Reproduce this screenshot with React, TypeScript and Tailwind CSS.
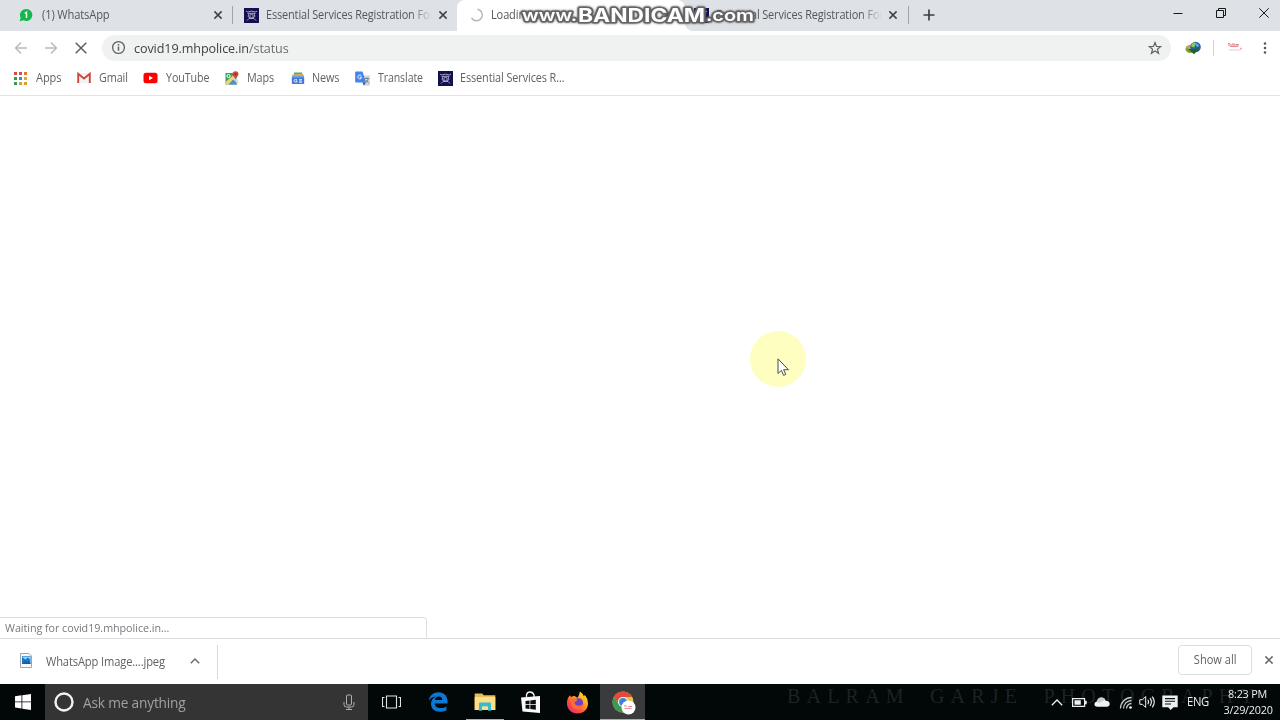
import type { ReactNode } from "react";

type TabProps = {
  title: string;
  icon: ReactNode;
  className: string;
  titleClassName?: string;
  closeClassName?: string;
};

type BookmarkProps = {
  label: string;
  icon: ReactNode;
  className: string;
  labelClassName: string;
};

function CloseIcon({ className }: { className?: string }) {
  return (
    <svg viewBox="0 0 10 10" className={`h-2.5 w-2.5 shrink-0 ${className ?? ""}`} aria-hidden="true">
      <path d="M1.4 1.4l7.2 7.2M8.6 1.4L1.4 8.6" stroke="currentColor" strokeWidth="1.5" fill="none" />
    </svg>
  );
}

function EmblemIcon() {
  return (
    <svg viewBox="0 0 15 15" className="h-[15px] w-[15px] shrink-0" aria-hidden="true">
      <rect width="15" height="15" fill="#13104f" />
      <g fill="none" stroke="#b9b5d6" strokeWidth="0.9">
        <path d="M2 3.2c2 1.5 3.5 0 5.5 0s3.5 1.5 5.5 0M3.5 5.3h8M5 5.5l-1 3 2 1.5M10 5.5l1 3-2 1.5M3 12.5l2-2h5l2 2" />
        <circle cx="7.5" cy="8" r="1.7" />
      </g>
    </svg>
  );
}

function WhatsAppIcon() {
  return (
    <svg viewBox="0 0 14 14" className="h-3.5 w-3.5 shrink-0" aria-hidden="true">
      <path d="M7.3 1A6 6 0 1 1 4.5 12.3L.7 13.3l1-3.5A6 6 0 0 1 7.3 1z" fill="#12b84b" />
      <path d="M5.8 5.3l1.7-1.1v5.9" fill="none" stroke="#fff" strokeWidth="1.4" />
    </svg>
  );
}

function SpinnerIcon() {
  return (
    <svg viewBox="0 0 14 14" className="h-3.5 w-3.5 shrink-0" aria-hidden="true">
      <path d="M7.5 1.2A5.8 5.8 0 1 1 1.5 9.8" fill="none" stroke="#b4b6ba" strokeWidth="1.4" />
    </svg>
  );
}

function Tab({ title, icon, className, titleClassName, closeClassName }: TabProps) {
  return (
    <div className={`relative flex h-[31px] shrink-0 items-center ${className}`}>
      {icon}
      <span
        className={`shrink-0 origin-left overflow-hidden whitespace-nowrap text-[12px] leading-[16px] tracking-[-0.15px] text-[#53575c] ${titleClassName ?? ""}`}
      >
        {title}
      </span>
      <CloseIcon className={`absolute text-[#3f4246] ${closeClassName ?? ""}`} />
    </div>
  );
}

function TabStrip() {
  return (
    <div className="relative flex h-[31px] bg-[#dee1e6]">
      <Tab
        title="(1) WhatsApp"
        icon={<WhatsAppIcon />}
        className="w-[233px] pb-px pl-[19px]"
        titleClassName="ml-[9px] scale-x-[0.93]"
        closeClassName="left-[213px] top-[10px]"
      />
      <span className="absolute left-[232px] top-1.5 h-[18px] w-px bg-[#a0a3a8]" />
      <Tab
        title="Essential Services Registration Form"
        icon={<EmblemIcon />}
        className="w-[224px] rounded-br-lg pb-px pl-[11px]"
        titleClassName="ml-[7px] w-[182px] scale-x-[0.91] [mask-image:linear-gradient(to_right,#000_88%,transparent)]"
        closeClassName="left-[205px] top-[10px]"
      />
      <Tab
        title="Loading..."
        icon={<SpinnerIcon />}
        className="w-[228px] rounded-t-lg bg-white pb-px pl-[13px]"
        titleClassName="ml-[7px] scale-x-[0.92]"
        closeClassName="left-[205px] top-[10px]"
      />
      <div className="w-[223px] bg-white">
        <Tab
          title="Essential Services Registration Form"
          icon={<EmblemIcon />}
          className="w-[223px] rounded-bl-lg bg-[#dee1e6] pb-px pl-[9px]"
          titleClassName="ml-[7px] w-[182px] scale-x-[0.91] [mask-image:linear-gradient(to_right,#000_88%,transparent)]"
          closeClassName="left-[203px] top-[10px]"
        />
      </div>
      <span className="mt-1.5 h-[18px] w-px bg-[#a0a3a8]" />
      <svg viewBox="0 0 12 12" className="ml-[14px] mt-[9px] h-3 w-3" aria-hidden="true">
        <path d="M6 .5v11M.5 6h11" stroke="#3c4043" strokeWidth="1.7" />
      </svg>
      <div className="ml-auto flex h-[25px] items-center text-[#17181a]">
        <svg viewBox="0 0 10 10" className="mr-[33px] h-2.5 w-2.5" aria-hidden="true">
          <path d="M.5 5.500h9" stroke="currentColor" />
        </svg>
        <svg viewBox="0 0 10 10" className="mr-[33px] h-2.5 w-2.5" aria-hidden="true">
          <path d="M.5 2.500h7v7h-7zM2.500 2.500v-2h7v7h-2" stroke="currentColor" fill="none" />
        </svg>
        <svg viewBox="0 0 10 10" className="mr-[11px] h-2.5 w-2.5" aria-hidden="true">
          <path d="M.3.3l9.4 9.4M9.7.3L.3 9.7" stroke="currentColor" />
        </svg>
      </div>
      <BandicamMark />
    </div>
  );
}

function BandicamMark() {
  return (
    <svg
      viewBox="0 0 244 28"
      className="absolute left-[517px] top-0 z-10 h-7 w-[244px] overflow-visible font-['Inter',sans-serif] font-bold drop-shadow-[0_0_1px_#555]"
      fill="#fff"
      stroke="#656565"
      strokeWidth="3.2"
      strokeLinejoin="round"
      paintOrder="stroke"
    >
      <text x="5" y="21" fontSize="16.5" fontWeight="600" textLength="55" lengthAdjust="spacingAndGlyphs">
        www.
      </text>
      <text x="61" y="21.5" fontSize="18.5" textLength="127" lengthAdjust="spacingAndGlyphs">
        BANDICAM
      </text>
      <text x="189" y="21" fontSize="16.5" fontWeight="600" textLength="48" lengthAdjust="spacingAndGlyphs">
        .com
      </text>
    </svg>
  );
}

function Toolbar() {
  return (
    <div className="flex h-[33px] items-center bg-white">
      <svg viewBox="0 0 14 14" className="ml-3.5 h-3.5 w-3.5" aria-hidden="true">
        <path d="M13 7H1.500M7 1.500L1.500 7 7 12.500" fill="none" stroke="#b7b9bc" strokeWidth="1.4" />
      </svg>
      <svg viewBox="0 0 14 14" className="ml-4 h-3.5 w-3.5" aria-hidden="true">
        <path d="M1 7h11.500M7 1.500L12.500 7 7 12.500" fill="none" stroke="#b7b9bc" strokeWidth="1.4" />
      </svg>
      <svg viewBox="0 0 14 14" className="ml-4 h-3.5 w-3.5" aria-hidden="true">
        <path d="M1.700 1.700l10.600 10.600M12.300 1.700L1.700 12.300" stroke="#5a5d61" strokeWidth="1.5" />
      </svg>
      <div className="ml-3.5 flex h-[26px] w-[1069px] items-center rounded-full bg-[#f0f2f2] pl-[9px] pr-[9px]">
        <svg viewBox="0 0 15 15" className="h-[15px] w-[15px]" aria-hidden="true">
          <circle cx="7.500" cy="7.500" r="5.900" fill="none" stroke="#5f6368" strokeWidth="1.3" />
          <path d="M7.500 6.600v4.200M7.500 4v1.500" stroke="#5f6368" strokeWidth="1.5" />
        </svg>
        <span className="ml-2 origin-left scale-x-[0.935] whitespace-nowrap text-[13.5px] leading-[18px] tracking-[-0.12px] text-[#3f4246]">
          covid19.mhpolice.in<span className="text-[#6a6d71]">/status</span>
        </span>
        <svg viewBox="0 0 14 14" className="ml-auto h-3.5 w-3.5" aria-hidden="true">
          <path
            d="M7 1.500l1.500 3.900 4.200.2-3.300 2.600 1.200 4.100L7 10l-3.600 2.300 1.200-4.100L1.300 5.600l4.200-.2z"
            fill="none"
            stroke="#5f6368"
            strokeWidth="1.2"
          />
        </svg>
      </div>
      <svg viewBox="0 0 16 14" className="ml-[14px] h-3.5 w-4" aria-hidden="true">
        <ellipse cx="5" cy="8" rx="4.500" ry="4" fill="#72a632" />
        <path d="M1 6.500Q4 2 8 5L5 9z" fill="#d9a14c" />
        <circle cx="10.500" cy="6" r="5.300" fill="#2861a5" />
        <path d="M7 2.500q3-2 4 0l-2 4-3-1z" fill="#8ccd55" />
        <path d="M11 2l3 2-1 2-2-1z" fill="#62aee2" />
        <path d="M3 8l6 5.300L14.500 7l-5 1z" fill="#1f6424" />
      </svg>
      <span className="ml-3 h-4 w-px bg-[#d2d4d7]" />
      <svg viewBox="0 0 16 12" className="ml-[13px] h-3 w-4" aria-hidden="true">
        <path d="M1 2h11v2H1z" fill="#f4b8bd" />
        <path d="M1 1.500h2M5 2h3M9 2.500h3M3 4.500h8M13 6l2 1" stroke="#e58a92" strokeWidth="1" />
        <path d="M2 8h12" stroke="#f4c7ca" />
      </svg>
      <svg viewBox="0 0 4 14" className="ml-5 h-3.5 w-1" fill="#55585c" aria-hidden="true">
        <circle cx="2" cy="2.500" r="1.300" />
        <circle cx="2" cy="7" r="1.300" />
        <circle cx="2" cy="11.500" r="1.300" />
      </svg>
    </div>
  );
}

const appDots = [
  { x: 0, y: 0, fill: "#d94b3d" },
  { x: 5, y: 0, fill: "#d94b3d" },
  { x: 10, y: 0, fill: "#dc7b2d" },
  { x: 0, y: 5, fill: "#2e9c55" },
  { x: 5, y: 5, fill: "#3c83e2" },
  { x: 10, y: 5, fill: "#e3a72b" },
  { x: 0, y: 10, fill: "#2e9c55" },
  { x: 5, y: 10, fill: "#d9a02f" },
  { x: 10, y: 10, fill: "#d9a02f" },
];

function Bookmark({ label, icon, className, labelClassName }: BookmarkProps) {
  return (
    <div className={`flex shrink-0 items-center ${className}`}>
      {icon}
      <span
        className={`origin-left whitespace-nowrap text-[12px] leading-[16px] tracking-[-0.1px] text-[#5f6266] ${labelClassName}`}
      >
        {label}
      </span>
    </div>
  );
}

function BookmarksBar() {
  return (
    <div className="flex h-8 items-center border-b border-[#e3e4e6] bg-white pb-[3px]">
      <Bookmark
        label="Apps"
        className="w-[77px] pl-3.5"
        labelClassName="ml-[9px] scale-x-[0.92]"
        icon={
          <svg viewBox="0 0 13 13" className="h-[13px] w-[13px]" aria-hidden="true">
            {appDots.map((dot) => (
              <rect key={`${dot.x}-${dot.y}`} x={dot.x} y={dot.y} width="3" height="3" fill={dot.fill} />
            ))}
          </svg>
        }
      />
      <Bookmark
        label="Gmail"
        className="w-[66px]"
        labelClassName="ml-2 scale-x-[0.9]"
        icon={
          <svg viewBox="0 0 14 12" className="h-3 w-3.5" aria-hidden="true">
            <path d="M1 1h12v10H1z" fill="#f2f2f2" />
            <path d="M1.200 11V1.800L7 6.500l5.800-4.700V11" fill="none" stroke="#cf473c" strokeWidth="1.9" />
          </svg>
        }
      />
      <Bookmark
        label="YouTube"
        className="w-[82px]"
        labelClassName="ml-2 scale-x-[0.89]"
        icon={
          <svg viewBox="0 0 15 12" className="h-3 w-[15px]" aria-hidden="true">
            <rect x=".5" y=".7" width="14" height="10.6" rx="2.5" fill="#f00" />
            <path d="M6 3.700v4.600L10 6z" fill="#fff" />
          </svg>
        }
      />
      <Bookmark
        label="Maps"
        className="w-[66px]"
        labelClassName="ml-2 scale-x-[0.9]"
        icon={
          <svg viewBox="0 0 14 14" className="h-3.5 w-3.5" aria-hidden="true">
            <path d="M.5 2h11v11.500H.5z" fill="#35a15a" />
            <path d="M.5 11L9 3.500l2 2-7.500 8H.5z" fill="#f0d175" />
            <path d="M4 13.500l4-4.200 4.500 4.200z" fill="#4b8ee6" />
            <path d="M9 6l4 3v4L7.500 8z" fill="#d5dade" />
            <circle cx="3.500" cy="5" r="1.600" fill="none" stroke="#fff" />
            <path d="M10.500.3a3 3 0 0 1 3 3c0 2-2 2.500-3 5.200-1-2.700-3-3.200-3-5.200a3 3 0 0 1 3-3z" fill="#d5483e" />
            <circle cx="10.500" cy="3.300" r="1" fill="#86251f" />
          </svg>
        }
      />
      <Bookmark
        label="News"
        className="w-[64px]"
        labelClassName="ml-[7px] scale-x-[0.9]"
        icon={
          <svg viewBox="0 0 14 14" className="h-3.5 w-3.5" aria-hidden="true">
            <path d="M3 1.500h8V6H3z" fill="#4bab68" />
            <path d="M1.500 3.500L12 2.500l.5 4h-11z" fill="#dcae5b" />
            <path d="M1 4.500h12v3H1z" fill="#74a4e6" />
            <path d="M.8 6.500h12.400v5.700q0 .8-.8.8H1.600q-.8 0-.8-.8z" fill="#4678d5" />
            <path d="M6 8.500H4.300Q3 8.500 3 9.800T4.300 11H6V9.800H4.800M8 8.600h3M8 10h3M8 11.300h3" stroke="#e6eefb" fill="none" strokeWidth=".9" />
          </svg>
        }
      />
      <Bookmark
        label="Translate"
        className="w-[82px]"
        labelClassName="ml-2 scale-x-[0.88]"
        icon={
          <svg viewBox="0 0 15 15" className="h-[15px] w-[15px]" aria-hidden="true">
            <path d="M6 4.500h8q1 0 1 1V14q0 .8-1 .8H9z" fill="#d3d6db" />
            <path d="M1 .5h6.500L11 11.500H1q-.8 0-.8-.8V1.300Q.2.500 1 .500z" fill="#4384ec" />
            <path d="M7.500 11.500H11l-2.300 3z" fill="#2754ad" />
            <path d="M6.300 4.500Q5 3.300 3.700 4.200 2.300 5.500 3.300 7.200 4.500 8.600 6 7.600 6.500 7 6.500 6.200H4.800" fill="none" stroke="#e7effc" />
            <path d="M10 7.500h4M12 6.500v1M13.300 7.500q-.5 2.500-2.500 4M11 9q1 2 2.700 3" fill="none" stroke="#707982" strokeWidth=".9" />
          </svg>
        }
      />
      <Bookmark
        label="Essential Services R..."
        className="pl-px"
        labelClassName="ml-[7px] scale-x-[0.905]"
        icon={<EmblemIcon />}
      />
    </div>
  );
}

function PageArea() {
  return (
    <main className="relative flex h-[542px] flex-col justify-end bg-white">
      <div className="absolute left-[750px] top-[235px] h-14 w-14 rounded-full bg-[#fefec0] blur-[0.5px]" />
      <svg viewBox="0 0 13 19" className="absolute left-[777px] top-[262px] h-[19px] w-[13px]" aria-hidden="true">
        <path
          d="M1 .8v14.700l3.400-3.100 2.200 5 2.200-1-2.200-4.700h4.800z"
          fill="#fff"
          stroke="#4d4d45"
          strokeLinejoin="round"
        />
      </svg>
      <div className="flex h-[21px] w-[427px] items-center rounded-tr border-r border-t border-[#dcdddf] pl-[5px]">
        <span className="origin-left scale-x-[0.935] whitespace-nowrap text-[11.5px] leading-[16px] tracking-[-0.05px] text-[#75787c]">
          Waiting for covid19.mhpolice.in...
        </span>
      </div>
    </main>
  );
}

function DownloadShelf() {
  return (
    <div className="flex h-[46px] items-center border-t border-[#dcdddf] bg-white">
      <svg viewBox="0 0 12 15" className="-mt-0.5 ml-5 h-[15px] w-3" aria-hidden="true">
        <path d="M.5.500h8.500l2.500 2.500v11.500H.5z" fill="#f6f8fa" stroke="#a1a6aa" />
        <path d="M2 3h8.500v8H2z" fill="#1678c9" />
        <path d="M2.500 4.500l3 2L8 4.500l2 2v-3H2.500z" fill="#9bd2f3" />
        <path d="M2 11l3-3 2 1.500L8.500 8l2 2v1z" fill="#1c5b9d" />
      </svg>
      <span className="ml-3.5 w-[120px] origin-left scale-x-[0.93] whitespace-nowrap text-[12px] leading-[16px] tracking-[-0.15px] text-[#5f6266]">
        WhatsApp Image....jpeg
      </span>
      <svg viewBox="0 0 10 6" className="-mt-0.5 ml-6 h-1.5 w-2.5" aria-hidden="true">
        <path d="M.8 5.300L5 1.100l4.200 4.200" fill="none" stroke="#66696d" strokeWidth="1.4" />
      </svg>
      <span className="ml-[17px] h-[34px] w-px bg-[#d9dadc]" />
      <button className="-mt-1 ml-auto h-[30px] w-[74px] rounded border border-[#dcdddf] text-[12px] font-medium leading-[16px] text-[#5f6266]">
        <span className="inline-block scale-x-[0.92]">Show all</span>
      </button>
      <CloseIcon className="-mt-1 ml-3 mr-1.5 text-[#66696d]" />
    </div>
  );
}

function PinnedApps() {
  return (
    <div className="flex h-9">
      <div className="flex w-[47px] items-center justify-center">
        <svg viewBox="0 0 19 14" className="h-3.5 w-[19px]" fill="none" stroke="#dfe3e4" aria-hidden="true">
          <path d="M4.500 1h10v12h-10zM2.500 2.500h-2v9h2M16.500 2.500h2v9h-2" strokeWidth="1.1" />
        </svg>
      </div>
      <div className="flex w-[46px] items-center justify-center">
        <svg viewBox="0 0 20 20" className="h-5 w-5" aria-hidden="true">
          <path
            d="M.7 8.800C1.500 3.500 5.500.2 10.500.2c5.600 0 9 3.800 9 9v2.300H6.700c.2 3.100 2.700 4.500 6 4.500 2.200 0 4.100-.6 5.700-1.600v4c-1.800.9-4 1.400-6.400 1.400-5.600 0-9-3.200-9-8 0-3.500 1.900-6.100 5-7.400C4.500 4.500 2.300 6.300.7 8.800zM6.900 8h7.300c0-2.400-1.200-3.600-3.400-3.600-2.100 0-3.500 1.300-3.900 3.600z"
            fill="#0b78d3"
          />
        </svg>
      </div>
      <div className="flex w-[47px] items-center justify-center">
        <div className="flex h-full w-[38px] items-center justify-center border-b border-[#84b5df] pt-px">
          <svg viewBox="0 0 22 18" className="h-[18px] w-[22px]" aria-hidden="true">
            <path d="M.7.500h7.500l1.500 1.800h11.600V17H.7z" fill="#e7bd59" />
            <path d="M.7 4h20.600v13H.7z" fill="#fbdf88" />
            <path d="M5 17.800V10.500Q5 9.500 6 9.500h10q1 0 1 1v7.300h-3V14q0-.7-.7-.7H8.700Q8 13.300 8 14v3.800z" fill="#35bad2" />
          </svg>
        </div>
      </div>
      <div className="flex w-[46px] items-center justify-center">
        <svg viewBox="0 0 22 23" className="h-[23px] w-[22px]" aria-hidden="true">
          <path d="M6.500 6.500V3.800Q7 1 10 1t4 3v2" fill="none" stroke="#f5f5f5" strokeWidth="1.3" />
          <path d="M1 6.500l19-1.500v17L2.500 20.500z" fill="#fafafa" />
          <path d="M5.500 10l4-.5v3.800h-4zM10.300 9.400l5.500-.6v4.500h-5.500zM5.500 14.100h4v3.900l-4-.4zM10.300 14.100h5.500v4.600l-5.500-.6z" fill="#0a0c0d" />
        </svg>
      </div>
      <div className="flex w-[46px] items-center justify-center">
        <svg viewBox="0 0 24 24" className="h-[23px] w-[23px]" aria-hidden="true">
          <defs>
            <linearGradient id="fox" x1="1" y1="0" x2="0.2" y2="1">
              <stop offset="0" stopColor="#fff043" />
              <stop offset=".45" stopColor="#ff9a20" />
              <stop offset=".75" stopColor="#fb4b3c" />
              <stop offset="1" stopColor="#e52883" />
            </linearGradient>
          </defs>
          <path
            d="M4 4.500l1.300 1.700Q7 5 9 5.200L12 7q2-3 2.500-6.500 3 1.800 4 5l1.200-1.300Q23 8 23 13c0 6-5 10.500-11 10.500S1 19 1 13C1 9.500 2 6.700 4 4.500z"
            fill="url(#fox)"
          />
          <circle cx="12.800" cy="12.500" r="5" fill="#6c42c9" />
          <path d="M4.500 9.500q4-3 7.500-.5-.5 2-3 2.500 0 4 4.500 4 3 0 5-2.500-1 6-6.500 6.200Q4.500 19 4.500 9.500z" fill="#fc6a37" />
        </svg>
      </div>
      <div className="flex w-[45px] items-center justify-center border-b border-[#84b5df] bg-[#3a3b3c] pt-0.5">
        <svg viewBox="0 0 24 24" className="ml-0.5 h-6 w-6" aria-hidden="true">
          <circle cx="11" cy="11" r="10.500" fill="#e7c746" />
          <path d="M1.900 5.800A10.500 10.500 0 0 1 20.300 6H11a5 5 0 0 0-4.700 6.500z" fill="#e04b3b" />
          <path d="M1.900 5.800A10.500 10.500 0 0 0 10 21.500l4.500-7-8-1.500z" fill="#389b51" />
          <circle cx="11" cy="11" r="5" fill="#f4f4f4" />
          <circle cx="11" cy="11" r="3.900" fill="#4480df" />
          <circle cx="16.500" cy="16.500" r="7" fill="#fff" />
          <path d="M12 15h3M16 15.500h4M12.500 17.500h7" stroke="#df8f93" />
        </svg>
      </div>
    </div>
  );
}

function SystemTray() {
  return (
    <div className="relative ml-auto flex h-9 items-center text-[#eef0f0]">
      <svg viewBox="0 0 12 7" className="h-[7px] w-3" aria-hidden="true">
        <path d="M.8 6.200L6 1l5.200 5.200" fill="none" stroke="currentColor" strokeWidth="1.3" />
      </svg>
      <svg viewBox="0 0 15 9" className="ml-[9px] h-[9px] w-[15px]" aria-hidden="true">
        <path d="M.6.600h12v7.800H.6z" fill="none" stroke="currentColor" strokeWidth="1.2" />
        <path d="M2.500 2.300h6.300v4.400H2.500zM13 2.700h1.700v3.600H13z" fill="currentColor" />
      </svg>
      <svg viewBox="0 0 16 10" className="ml-[7px] h-2.5 w-4" aria-hidden="true">
        <path d="M3.500 9.700Q.3 9.500.4 7 .7 4.500 3 4.500 3.800.8 7.500.6q3-.1 4.200 3.200 3.500 0 4 3 0 2.700-3 2.900z" fill="#f2f2f2" />
        <path d="M2.500 4.500Q4 .8 7.500.6q2.500 0 3.700 2.200L5 6z" fill="#c9cdce" />
      </svg>
      <svg viewBox="0 0 14 13" className="ml-[9px] h-[13px] w-3.5" fill="none" stroke="#c5cacb" aria-hidden="true">
        <path d="M1.500 12.500A11 11 0 0 1 12.500 1.500M4.500 12.500a8 8 0 0 1 8-8M7.500 12.500a5 5 0 0 1 5-5" strokeWidth="1.3" />
        <circle cx="11.500" cy="11.500" r="1.300" fill="#fff" stroke="none" />
      </svg>
      <svg viewBox="0 0 17 14" className="ml-[6px] h-3.5 w-[17px]" fill="none" stroke="currentColor" aria-hidden="true">
        <path d="M.8 4.700h2.700L6.700 1.500v11L3.500 9.300H.8z" />
        <path d="M8.800 4.700q1.500 2.300 0 4.600M11 3.200q2.800 3.800 0 7.600M13.300 1.700q4 5.300 0 10.600" strokeWidth="1.1" />
      </svg>
      <svg viewBox="0 0 16 15" className="ml-[6px] mt-px h-[15px] w-4" aria-hidden="true">
        <path d="M.3.500h15.400v11.700h-4.200L8.700 15l-2.500-2.800H.3z" fill="currentColor" />
        <path d="M3 3.600h10M3 6.300h10M3 9h6" stroke="#0c1011" strokeWidth="1.1" />
      </svg>
      <span className="ml-[9px] w-[23px] origin-left scale-x-[0.9] whitespace-nowrap text-[12.5px] leading-[16px] tracking-[-0.4px]">
        ENG
      </span>
      <div className="ml-[12px] mr-[7px] w-[51px] scale-x-[0.94] whitespace-nowrap text-center text-[11.5px] leading-[16px] tracking-[-0.25px]">
        <p>8:23 PM</p>
        <p>3/29/2020</p>
      </div>
    </div>
  );
}

function Taskbar() {
  return (
    <div className="relative flex h-9 items-center overflow-hidden bg-[#020708]">
      <span className="absolute left-[787px] top-[1px] whitespace-nowrap font-['Liberation_Serif',serif] text-[20px] leading-[23px] tracking-[6.2px] text-[#1d2223] [word-spacing:9px]">
        BALRAM GARJE PHOTOGRAPHY
      </span>
      <div className="flex h-full w-[45px] items-center justify-center">
        <svg viewBox="0 0 16 16" className="h-4 w-4" fill="#fff" aria-hidden="true">
          <path d="M0 2.300L6.500 1.300v6.200H0zM7.300 1.200L16 0v7.500H7.300zM0 8.300h6.500v6.200L0 13.600zM7.300 8.300H16V16l-8.700-1.300z" />
        </svg>
      </div>
      <div className="flex h-full w-[323px] items-center bg-[#343434]">
        <svg viewBox="0 0 20 20" className="ml-[9px] h-5 w-5" aria-hidden="true">
          <circle cx="10" cy="10" r="8.500" fill="none" stroke="#f3f3f3" strokeWidth="2.4" />
        </svg>
        <span className="ml-[9px] mt-px origin-left scale-x-[0.945] whitespace-nowrap text-[14.5px] leading-[20px] tracking-[-0.2px] text-[#a0a0a0]">
          Ask me anything
        </span>
        <svg viewBox="0 0 12 17" className="ml-auto mr-[13px] h-[17px] w-3" fill="none" stroke="#aeb0b0" aria-hidden="true">
          <rect x="3.500" y="1" width="5" height="10" rx="1" />
          <path d="M1 8v2.500Q1 13 3.500 13h5Q11 13 11 10.500V8M6 13v2.500M3 15.500h6" />
        </svg>
      </div>
      <PinnedApps />
      <SystemTray />
    </div>
  );
}

export default function App() {
  return (
    <div className="flex h-[720px] w-[1280px] flex-col overflow-hidden bg-white font-['Open_Sans','Noto_Sans',sans-serif]">
      <TabStrip />
      <Toolbar />
      <BookmarksBar />
      <PageArea />
      <DownloadShelf />
      <Taskbar />
    </div>
  );
}
